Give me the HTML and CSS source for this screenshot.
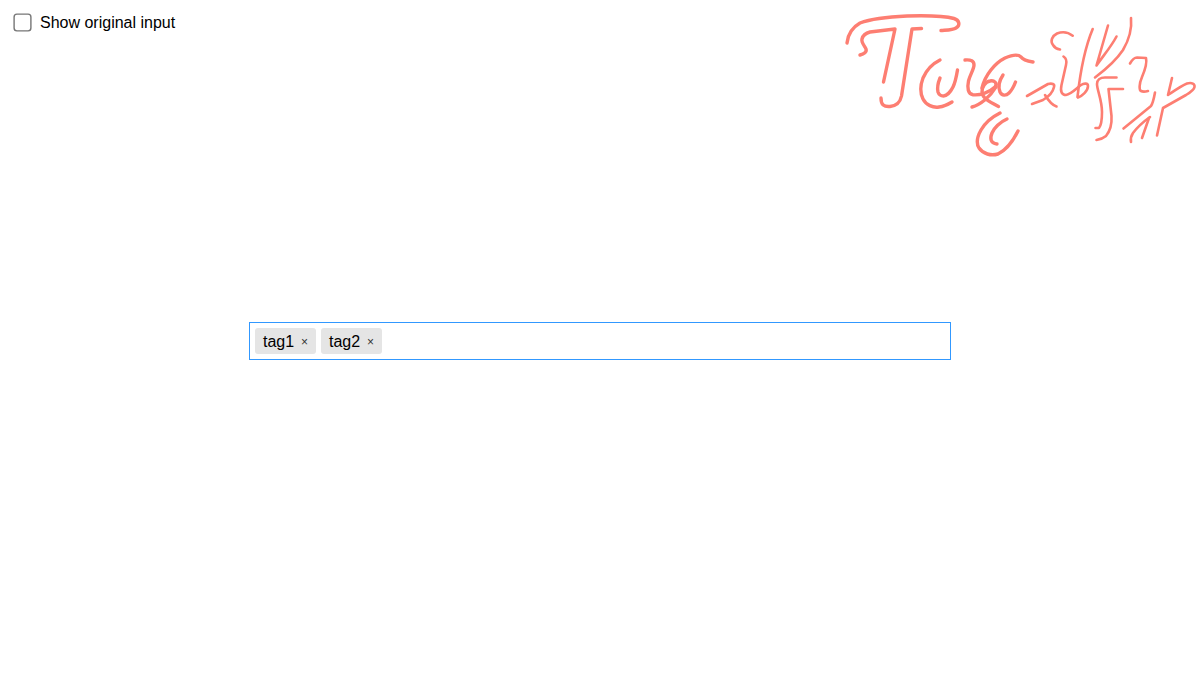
FILE: index.html
```html
<!DOCTYPE html>
<html lang="en">
<head>
<meta charset="utf-8">
<title>Tagify</title>
<link rel="stylesheet" href="styles.css">
</head>
<body>
<div class="page">
  <label class="toggle">
    <input class="toggle-box" type="checkbox">
    <span>Show original input</span>
  </label>
  <svg class="logo" viewBox="840 5 360 160" aria-label="Tagify logo" role="img">
    <g class="logo-heavy">
      <path d="M847 43C848 33 853 27 860 23C868 20 885 17 907 16C925 15.5 945 16 954 18.5C959 20 961 25 956 28C953 30 947 30 941 30.5"/>
      <path d="M860 55C864 54 867 52 866 49C865 46 861 43 862 39C863 35 866 33 870 32L895 29L883.5 82"/>
      <path d="M921.5 28.5L912 29L901.5 96C900 103 896 106 890 106.5C884 107 881 105 881 98"/>
      <path d="M940 60C932 64 926 71 923 78C920 86 920 93 923 99C926 105 933 108 939 107C944 106.5 948 104.5 952 102"/>
      <path d="M940 78C938 83 937 88 938 92C939 95 941 96 943.5 96C947 96 951 91 953 87C955.5 82 956.5 76 957.5 70"/>
      <path d="M965 60C971 59.5 974 61 974 65C974 69 970 75 968.5 81C967 88 968 94 973 94.7C980 95.5 990 92 995 87C998 83 994 80 990 81C985 82 982 87 982 92C982 98 990 102 998.5 106.5"/>
      <path d="M982 88C985 75 995 63 1005 58C1012 55 1018 54 1021 57C1023 60 1027 61 1033 62"/>
      <path d="M972 107C980 105 990 97 996 87"/>
      <path d="M1003 75C999 81 998 87 1000 92C1002 96 1006 96 1009 93C1012 90 1014 86 1015.5 82"/>
      <path d="M1000 113C992 117 985 123 981 130C977 137 976 143 979 148C983 154 991 156 998 154C1006 150 1013 141 1018 131"/>
      <path d="M1007 119C1000 122 994 128 992 133C990 138 990 143 997 144"/>
    </g>
    <g class="logo-light">
      <path d="M1072.7 35.7C1068 32 1062 31.5 1057 33.5C1052 36 1050 41 1053 45C1054.5 47.5 1057 49 1060 49.5"/>
      <path d="M1063.5 56.5C1066 58 1067 61 1066 65L1061.5 85C1060 92 1062 95 1066 95C1071 94.5 1077 88 1081 85C1084 83 1088 83 1088 86C1088 91 1082 96 1078 97.5"/>
      <path d="M1092.7 29C1086 45 1081 65 1077.5 97"/>
      <path d="M1108 25.5L1096.5 65.5C1103 56 1111 47 1116.5 36.5"/>
      <path d="M1131 18C1132 28 1130 38 1123 50C1115 62 1105 70 1095 77.5"/>
      <path d="M1116.5 77.5L1105 77.5C1100 77.5 1097 80 1097 84C1097 90 1102 100 1102 112C1102 120 1101.5 125 1099 128L1095.5 128"/>
      <path d="M1123 89L1108.5 89L1111.5 116C1112 124 1110 131 1106 136C1103 138.5 1100 139.5 1096.5 140"/>
      <path d="M1130 63.5C1132 60 1134 57.5 1137 57.5L1146 58C1147 62 1145 70 1142 77C1139 84 1139 90 1141 91C1143 92 1146 91.5 1148 91"/>
      <path d="M1123.5 128.5L1151 106C1153 103 1154 98 1155 92.5"/>
      <path d="M1150 117C1143 122 1136 129 1133 133C1131 136 1130.5 139 1131 142"/>
      <path d="M1149 118L1142 138"/>
      <path d="M1172 78L1168 95C1174 91 1181 86 1187 83.5C1192 82 1195 84 1194.5 87C1194 90 1191 92 1186 95L1163 108L1157 135.5"/>
      <path d="M1027 96L1048 84C1052 83 1055 84 1054 87C1053 92 1048 97 1043 100L1032 104"/>
      <path d="M1045 95C1048 100 1052 105 1056.5 106.5"/>
    </g>
  </svg>
  <div class="stage">
    <div class="tags">
      <span class="tag"><span>tag1</span><span class="tag-x">×</span></span>
      <span class="tag"><span>tag2</span><span class="tag-x">×</span></span>
    </div>
  </div>
</div>
</body>
</html>
```

FILE: styles.css
```css
* { box-sizing: border-box; }
html, body { margin: 0; height: 100%; background: #fff; }
body { font-family: "Liberation Sans", Arial, sans-serif; font-size: 16px; color: #000; }
.page { min-height: 100vh; display: flex; flex-direction: column; position: relative; }
.toggle { height: 45px; padding-left: 16px; display: flex; align-items: center; gap: 11px; }
.toggle-box { appearance: none; margin: 0; width: 13px; height: 13px; border: 1px solid #767676; border-radius: 2.5px; background: #fff; transform: scale(1.4); }
.logo { position: absolute; top: 5px; right: 0; width: 360px; height: 160px; }
.logo path { fill: none; stroke: #fd7e72; stroke-linecap: round; stroke-linejoin: round; }
.logo-heavy path { stroke-width: 3.4; }
.logo-light path { stroke-width: 2.6; }
.stage { flex: 1; display: flex; align-items: center; justify-content: center; padding-bottom: 45px; }
.tags { width: 702px; height: 38px; border: 1px solid #3198ff; padding: 5px; display: flex; gap: 5px; }
.tag { width: 61px; height: 26px; padding: 2px 8px 0; background: #e5e5e5; border-radius: 3px; display: flex; align-items: center; justify-content: space-between; }
.tag-x { font-size: 12px; color: #333; }
```
